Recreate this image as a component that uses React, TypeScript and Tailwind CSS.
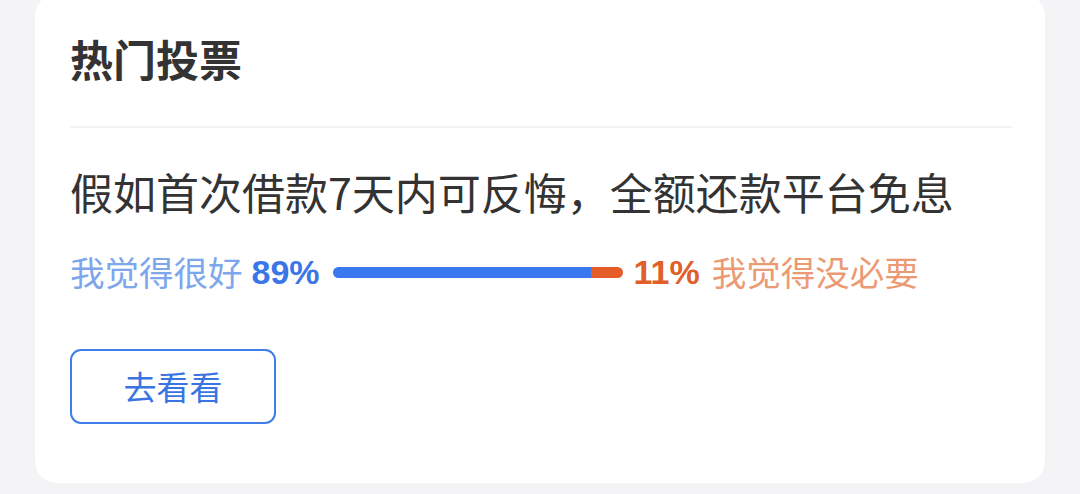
import React from "react"

const cjk = { fontFamily: '"Noto Sans CJK SC", "Noto Sans", sans-serif' }
const num = { fontFamily: '"Liberation Sans", Arial, sans-serif' }

export default function App() {
  const yes = 89
  const no = 11

  return (
    <div className="w-[1080px] h-[494px] overflow-hidden bg-[#f4f4f6]" style={cjk}>
      <div className="ml-[35px] mt-[-6px] w-[1010px] rounded-[22px] bg-white pl-[35px] pr-[33px] pt-[43px] pb-[59px]">
        {/* Header */}
        <h1 className="text-[43px] leading-[42px] font-bold text-[#333333]">热门投票</h1>
        <div className="mt-[47px] h-[2px] bg-[#f3f3f5]" />

        {/* Question */}
        <p className="mt-[38px] text-[43px] leading-[50px] text-[#333333]">
          假如首次借款7天内可反悔，全额还款平台免息
        </p>

        {/* Vote bar */}
        <div className="mt-[36px] flex h-[40px] items-center">
          <span className="text-[34.5px] text-[#7ea6ec]">我觉得很好</span>
          <span className="ml-[9px] text-[34px] font-bold text-[#3a76e8]" style={num}>
            {yes}%
          </span>
          <div className="ml-[13px] flex h-[11px] w-[290px] overflow-hidden rounded-full">
            <div className="h-full bg-[#3a78f0]" style={{ width: `${yes}%` }} />
            <div className="h-full bg-[#e45c28]" style={{ width: `${no}%` }} />
          </div>
          <span className="ml-[11px] text-[34px] font-bold text-[#e0602a]" style={num}>
            {no}%
          </span>
          <span className="ml-[12px] text-[34.5px] text-[#ec9a74]">我觉得没必要</span>
        </div>

        {/* Button */}
        <button className="mt-[57px] flex h-[75px] w-[206px] items-center justify-center rounded-[11px] border-2 border-[#3f7de8] text-[33px] text-[#3a74e2]">
          去看看
        </button>
      </div>
    </div>
  )
}
